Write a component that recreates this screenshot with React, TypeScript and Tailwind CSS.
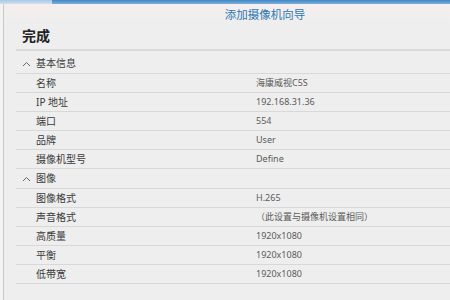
const basic = [
  { label: "名称", value: "海康威视C5S" },
  { label: "IP 地址", value: "192.168.31.36" },
  { label: "端口", value: "554" },
  { label: "品牌", value: "User" },
  { label: "摄像机型号", value: "Define" },
];

const video = [
  { label: "图像格式", value: "H.265" },
  { label: "声音格式", value: "（此设置与摄像机设置相同）" },
  { label: "高质量", value: "1920x1080" },
  { label: "平衡", value: "1920x1080" },
  { label: "低带宽", value: "1920x1080" },
];

function Chevron() {
  return (
    <svg width="9" height="6" viewBox="0 0 9 6" className="text-[#666]">
      <path d="M1 5 L4.5 1.5 L8 5" fill="none" stroke="currentColor" strokeWidth="1" />
    </svg>
  );
}

function Section({ title }: { title: string }) {
  return (
    <div className="flex h-[20px] items-center gap-[5px] border-b border-[#d8d8d8] pl-[6px] text-[10px] text-[#3a3a3a]">
      <Chevron />
      <span>{title}</span>
    </div>
  );
}

function Row({ label, value }: { label: string; value: string }) {
  return (
    <div className="flex h-[19px] items-center border-b border-[#d8d8d8]">
      <div className="w-[240px] pl-[20px] text-[10px] text-[#3a3a3a]">{label}</div>
      <div className="text-[9px] text-[#5a5a5a]">{value}</div>
    </div>
  );
}

export default function App() {
  return (
    <div
      className="relative flex h-[300px] w-[450px] flex-col overflow-hidden bg-[#eeeeee]"
      style={{ fontFamily: '"Noto Sans", "Noto Sans CJK SC", sans-serif' }}
    >
      <div className="flex h-[4px] shrink-0">
        <div className="w-[52px] bg-gradient-to-b from-[#a9c9e6] to-[#cfe0ef]" />
        <div className="flex-1 bg-gradient-to-b from-[#3f86c4] to-[#7cb1dc]" />
      </div>
      <div className="flex flex-1">
        <div className="w-[4px] border-r border-[#c8c8c8] bg-[#f3f3f3]" />
        <div className="flex flex-1 flex-col">
          <div className="flex h-[20px] items-center justify-center bg-gradient-to-b from-[#f6eeee] to-[#eeeeee] pl-[76px] pt-[1px] text-[11.5px] text-[#2b78b3]">
            添加摄像机向导
          </div>
          <div className="ml-[12px] flex flex-col">
            <div className="flex h-[27px] items-center border-b-2 border-[#dadada] pl-[6px] pb-[2px] text-[14px] font-bold text-[#222]">
              完成
            </div>
            <div className="h-[3px]" />
            <Section title="基本信息" />
            {basic.map((r) => (
              <Row key={r.label} {...r} />
            ))}
            <Section title="图像" />
            {video.map((r) => (
              <Row key={r.label} {...r} />
            ))}
          </div>
        </div>
      </div>
    </div>
  );
}
